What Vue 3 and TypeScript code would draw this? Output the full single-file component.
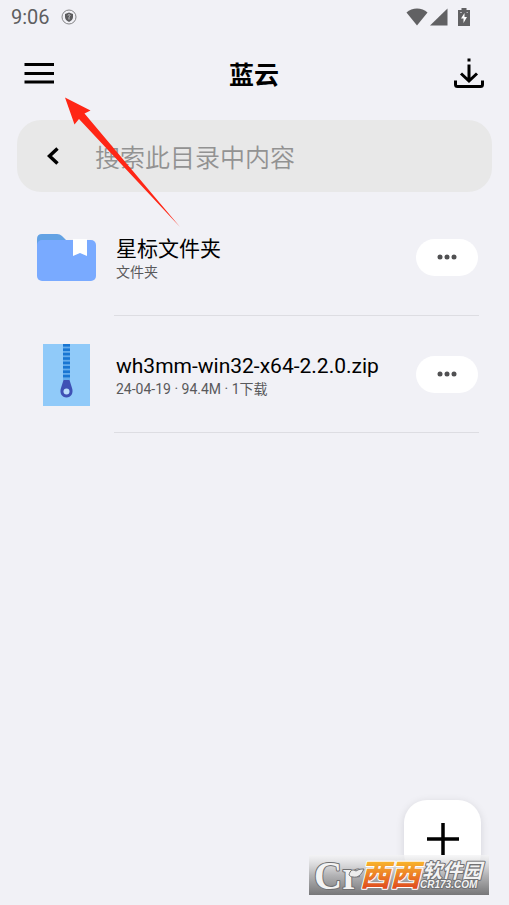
<script setup lang="ts">
import { ref } from 'vue'

interface Entry {
  kind: 'folder' | 'zip'
  name: string
  detail: string
}

const query = ref('')
const entries: Entry[] = [
  { kind: 'folder', name: '星标文件夹', detail: '文件夹' },
  { kind: 'zip', name: 'wh3mm-win32-x64-2.2.0.zip', detail: '24-04-19 · 94.4M · 1下载' },
]
const teeth = Array.from({ length: 8 }, (_, i) => i * 4.4)
</script>

<template>
  <div class="screen">
    <div class="status">
      <span class="clock">9:06</span>
      <svg class="shield" width="16" height="16" viewBox="0 0 16 16">
        <circle cx="8" cy="8" r="7" fill="none" stroke="#858587" stroke-width="1" />
        <path d="M8 3.500 12 5v3c0 2.300-1.700 3.900-4 5-2.300-1.100-4-2.700-4-5V5z" fill="#5c5c5e" />
        <path d="M7 6.500c0-1.300 2.200-1.200 2 .2-.1.800-1 .9-1 1.800v2" fill="none" stroke="#c8c8cc" stroke-width="1" />
      </svg>
      <div class="signals">
        <svg width="22" height="18" viewBox="0 0 22 18"><path d="M.5 4.500C6-1 16-1 21.500 4.500L11 17.500z" fill="#616163" /></svg>
        <svg width="18" height="18" viewBox="0 0 18 18"><path d="M17.500.5v17H0z" fill="#616163" /></svg>
        <svg class="battery" width="12" height="18" viewBox="0 0 12 18">
          <path d="M3.500 0h5v2H12v16H0V2h3.500z" fill="#616163" />
          <path d="M2 4.500h2M8.500 4.500h1.500" stroke="#b4b4b8" stroke-width="1" />
          <path d="M6.500 5 3 10.500h2.500V15L9 9H6.500z" fill="#fff" />
        </svg>
      </div>
    </div>

    <header class="bar">
      <button class="plain" type="button" aria-label="菜单">
        <svg width="30" height="30" viewBox="0 0 30 30"><path d="M.5 6.500H30M.5 15.500H30M.5 24H30" stroke="#000" stroke-width="3" /></svg>
      </button>
      <h1>蓝云</h1>
      <button class="plain" type="button" aria-label="下载">
        <svg width="30" height="30" viewBox="0 0 30 30" fill="none" stroke="#000" stroke-width="3">
          <path d="M15 .5v3M15 6.500V23M7 15.500l8 7.500 8-7.500" />
          <path d="M1.500 22.500v4q0 2 2 2h23q2 0 2-2v-4" />
        </svg>
      </button>
    </header>

    <main>
      <div class="search">
        <button class="plain" type="button" aria-label="返回">
          <svg width="12" height="18" viewBox="0 0 12 18"><path d="M10.500 1.500 2.500 9l8 7.500" fill="none" stroke="#000" stroke-width="3.500" /></svg>
        </button>
        <input v-model="query" type="text" placeholder="搜索此目录中内容" aria-label="搜索此目录中内容" />
      </div>

      <ul class="list">
        <li v-for="entry in entries" :key="entry.name" class="row">
          <div class="thumb">
            <svg v-if="entry.kind === 'folder'" width="60" height="48" viewBox="-1 0 60 48">
              <path d="M0 12V5q0-5 5-5h15q3 0 5 2l5 5v8H0z" fill="#63a2e4" />
              <rect y="6" width="59" height="41" rx="5" fill="#79aaff" />
              <path d="M36 5h14v17l-7-3-7 3z" fill="#fff" />
            </svg>
            <svg v-else width="47" height="62" viewBox="0 0 47 62">
              <path d="M0 0h47v62H0z" fill="#90caf9" />
              <path d="M20 0h7v36h-7z" fill="#64acec" />
              <rect v-for="y in teeth" :key="y" x="20" :y="y" width="7" height="2.600" fill="#1976d2" />
              <path d="M20.500 36h6l2.500 8c1.800 5-1 9.500-5.500 9.500S16.200 49 18 44z" fill="#3f51b5" />
              <circle cx="23.500" cy="47.500" r="3" fill="#bbdefb" />
            </svg>
          </div>
          <div class="body">
            <div class="text">
              <div class="name">{{ entry.name }}</div>
              <div class="detail">{{ entry.detail }}</div>
            </div>
            <button class="more" type="button" :aria-label="`${entry.name} 更多`">
              <svg width="20" height="6" viewBox="0 0 20 6" fill="#505052">
                <circle cx="3" cy="3" r="2.500" /><circle cx="10" cy="3" r="2.500" /><circle cx="17" cy="3" r="2.500" />
              </svg>
            </button>
          </div>
        </li>
      </ul>
    </main>

    <button class="add" type="button" aria-label="新建">
      <svg width="32" height="32" viewBox="0 0 32 32"><path d="M16 0v32M0 16h32" stroke="#000" stroke-width="3.500" /></svg>
    </button>

    <svg class="arrow" width="116" height="132" viewBox="0 0 116 132">
      <path d="M0 0.500 25.500 13.500 19.500 16.500 115 130 14 22 9.500 27.500z" fill="#ff2615" />
    </svg>

    <svg class="stamp" width="180" height="40" viewBox="0 0 180 40">
      <defs>
        <linearGradient id="stampBack" x2="0" y2="1">
          <stop stop-color="#f4f4f5" stop-opacity=".7" />
          <stop offset=".5" stop-color="#b4b4b6" />
          <stop offset="1" stop-color="#777779" />
        </linearGradient>
        <linearGradient id="stampFire" x2="0" y2="1">
          <stop offset=".25" stop-color="#f8b32c" />
          <stop offset=".85" stop-color="#df4a20" />
        </linearGradient>
      </defs>
      <path d="M0 0h180v40H0z" fill="url(#stampBack)" />
      <text class="latin" x="5" y="34">Cr</text>
      <path d="M40 20c1-5 4-6 7-4 3-2 5-2 8-2-3 6-6 9-11 8-2 0-3-1-4-2z" fill="#ededed" stroke="#707072" />
      <text class="fire" x="51" y="31">西西</text>
      <text class="cjk" x="113" y="23">软件园</text>
      <text class="site" x="111" y="33">CR173.COM</text>
    </svg>
  </div>
</template>

<style>
body {
  background: #f1f1f6;
}
</style>

<style scoped>
.screen {
  position: relative;
  min-height: 100vh;
  box-sizing: border-box;
  background: #f1f1f6;
  color: #000;
  font-family: Roboto, "Noto Sans CJK SC", sans-serif;
}
svg {
  display: block;
}
button {
  border: 0;
  padding: 0;
  color: inherit;
  font: inherit;
  cursor: pointer;
}
.plain {
  background: none;
}
.status {
  display: flex;
  align-items: center;
  gap: 11px;
  height: 34px;
  padding: 0 39px 0 11px;
  color: #5e5e60;
}
.clock {
  font-size: 20px;
}
.signals {
  display: flex;
  gap: 2px;
  margin-left: auto;
}
.battery {
  margin-left: 8px;
}
.bar {
  display: flex;
  align-items: center;
  justify-content: space-between;
  height: 78px;
  padding: 0 25px 0 24px;
}
h1 {
  margin: 0;
  font-size: 25px;
  font-weight: 700;
}
main {
  padding: 8px 17px 0;
}
.search {
  display: flex;
  align-items: center;
  gap: 36px;
  height: 72px;
  padding: 0 30px;
  box-sizing: border-box;
  border-radius: 24px;
  background: #e8e8e8;
}
.search input {
  flex: 1;
  min-width: 0;
  padding: 0;
  border: 0;
  outline: 0;
  background: none;
  font: 350 25px "Noto Sans CJK SC", sans-serif;
}
.search input::placeholder {
  color: #929292;
  opacity: 1;
}
.list {
  margin: 7px 0 0;
  padding: 0 13px 0 19px;
  list-style: none;
}
.row {
  display: flex;
  gap: 18px;
  height: 117px;
}
.thumb {
  display: flex;
  align-items: center;
  justify-content: center;
  width: 60px;
}
.body {
  flex: 1;
  min-width: 0;
  display: flex;
  align-items: center;
  justify-content: space-between;
  padding-right: 1px;
  border-bottom: 1px solid #dddde2;
}
.text {
  padding: 4px 0 0 2px;
}
.name {
  font-size: 21px;
  line-height: 26px;
}
.detail {
  color: #59595b;
  font-size: 14px;
  line-height: 20px;
}
.more {
  display: grid;
  place-items: center;
  width: 62px;
  height: 37px;
  border-radius: 19px;
  background: #fff;
}
.add {
  position: absolute;
  right: 28px;
  bottom: 28px;
  display: grid;
  place-items: center;
  width: 77px;
  height: 77px;
  border-radius: 23px;
  background: #fff;
  box-shadow: 0 2px 8px #00001a20;
}
.arrow {
  position: absolute;
  left: 65px;
  top: 97px;
  pointer-events: none;
}
.stamp {
  position: absolute;
  right: 20px;
  bottom: 10px;
  overflow: visible;
  pointer-events: none;
}
.stamp text {
  paint-order: stroke;
  stroke: #707072;
  stroke-width: 2px;
  stroke-linejoin: round;
  fill: #f3f3f3;
}
.latin {
  font: 700 39px "Liberation Serif", serif;
}
.stamp .fire {
  font: italic 900 30px "Noto Sans CJK SC", sans-serif;
  fill: url(#stampFire);
  stroke: #fff;
}
.cjk {
  font: italic 700 20px "Noto Sans CJK SC", sans-serif;
}
.site {
  font: italic 700 10px "Liberation Sans", sans-serif;
}
</style>
